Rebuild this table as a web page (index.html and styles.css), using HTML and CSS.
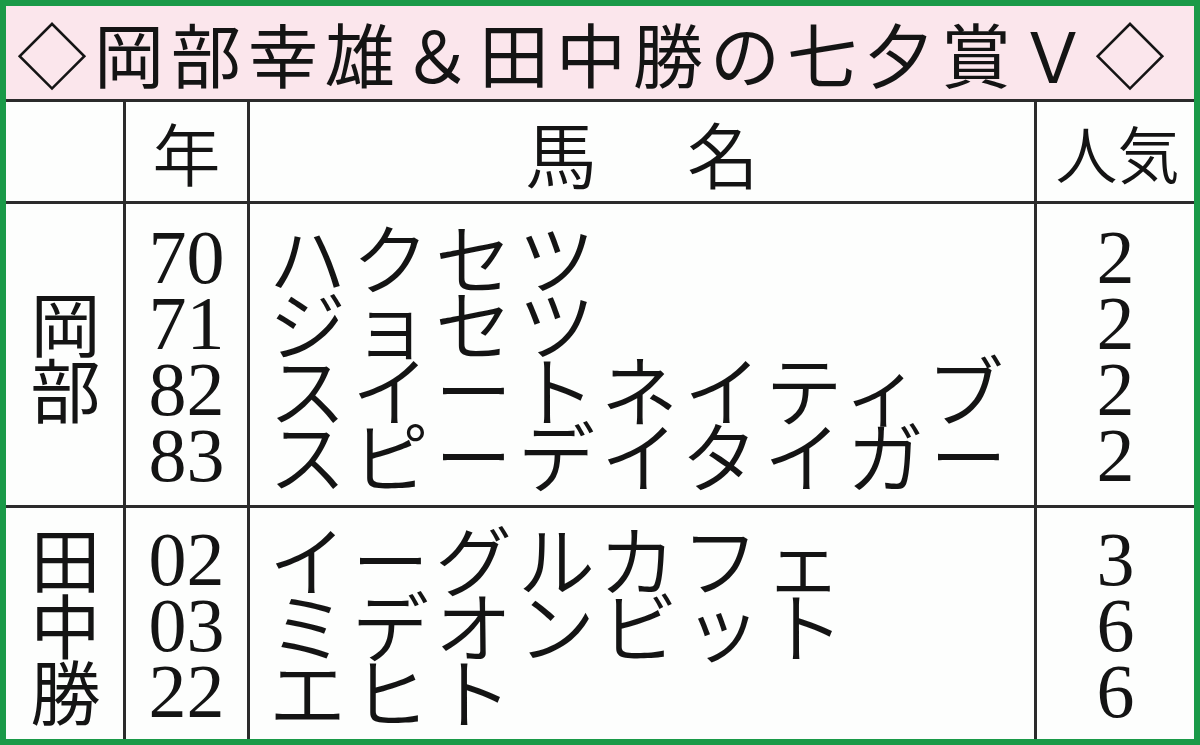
FILE: index.html
```html
<!DOCTYPE html>
<html lang="ja">
<head>
<meta charset="utf-8">
<title>岡部幸雄＆田中勝の七夕賞Ｖ</title>
<link rel="stylesheet" href="styles.css">
</head>
<body>
<div class="frame">
  <div class="title">◇岡部幸雄＆田中勝の七夕賞Ｖ◇</div>
  <div class="grid">
    <div class="cell c1 hdr"></div>
    <div class="cell c2 hdr"><span class="hd">年</span></div>
    <div class="cell c3 hdr center"><span class="hd wide">馬　名</span></div>
    <div class="cell c4 hdr"><span class="hd ninki">人気</span></div>

    <div class="cell c1 grp"><div class="vlabel"><span>岡</span><span>部</span></div></div>
    <div class="cell c2 grp"><div class="nums"><span>70</span><span>71</span><span>82</span><span>83</span></div></div>
    <div class="cell c3 grp"><div class="names"><span>ハクセツ</span><span>ジョセツ</span><span>スイートネイティブ</span><span>スピーデイタイガー</span></div></div>
    <div class="cell c4 grp"><div class="nums"><span>2</span><span>2</span><span>2</span><span>2</span></div></div>

    <div class="cell c1 last"><div class="vlabel"><span>田</span><span>中</span><span>勝</span></div></div>
    <div class="cell c2 last"><div class="nums"><span>02</span><span>03</span><span>22</span></div></div>
    <div class="cell c3 last"><div class="names"><span>イーグルカフェ</span><span>ミデオンビット</span><span>エヒト</span></div></div>
    <div class="cell c4 last"><div class="nums"><span>3</span><span>6</span><span>6</span></div></div>
  </div>
</div>
</body>
</html>
```

FILE: styles.css
```css
html, body {
  margin: 0;
  padding: 0;
  background: #ffffff;
}

.frame {
  width: 1200px;
  height: 745px;
  box-sizing: border-box;
  border: 6px solid #1a9a48;
  display: flex;
  flex-direction: column;
  background: #fdfefd;
  color: #141414;
  font-family: "Noto Sans CJK JP", "Noto Sans", sans-serif;
  font-weight: 350;
  overflow: hidden;
}

.title {
  height: 96px;
  box-sizing: border-box;
  flex: none;
  background: #fbe6ec;
  border-bottom: 3px solid #2b2b2b;
  display: flex;
  align-items: center;
  padding-left: 11px;
  font-size: 70px;
  font-weight: 400;
  line-height: 1;
  letter-spacing: 7px;
  white-space: nowrap;
}

.grid {
  flex: 1;
  display: grid;
  grid-template-columns: 120px 124px 787px 1fr;
  grid-template-rows: 102px 304px 1fr;
}

.cell {
  box-sizing: border-box;
  display: flex;
  align-items: center;
  justify-content: center;
  border-right: 3px solid #2b2b2b;
}

.c4 {
  border-right: none;
}

.hdr,
.grp {
  border-bottom: 3px solid #2b2b2b;
}

.hd {
  font-size: 68px;
  line-height: 1;
}

.wide {
  font-size: 72px;
  letter-spacing: 9px;
  margin-right: -9px;
}

.ninki {
  font-size: 62px;
  margin-left: 4px;
}

.c3 {
  justify-content: flex-start;
  padding-left: 19px;
}

.c3.center {
  justify-content: center;
  padding-left: 0;
}

.vlabel {
  display: flex;
  flex-direction: column;
  align-items: center;
  font-size: 70px;
  font-weight: 400;
  line-height: 66px;
  margin-left: 2px;
}

.nums {
  display: flex;
  flex-direction: column;
  align-items: center;
  font-family: "Liberation Serif", "DejaVu Serif", serif;
  font-weight: 400;
  font-size: 76px;
  line-height: 66px;
  margin-top: 2px;
}

.names {
  display: flex;
  flex-direction: column;
  font-size: 77px;
  line-height: 66px;
  letter-spacing: 6px;
  white-space: nowrap;
}
```
